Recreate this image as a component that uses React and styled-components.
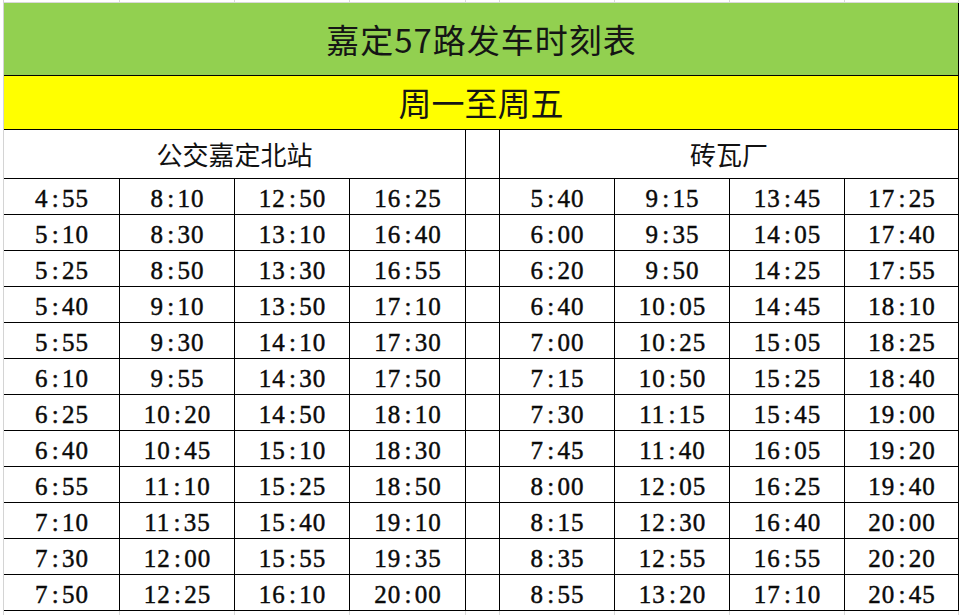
import React from "react";
import styled, { createGlobalStyle } from "styled-components";

const GlobalStyle = createGlobalStyle`
  html, body { margin: 0; padding: 0; background: #ffffff; }
  * { box-sizing: border-box; }
`;

const COLS = "116px 115px 115px 116px 34px 115px 115px 115px 114px";
const CJK = `"Noto Sans CJK SC", "Noto Sans", sans-serif`;

const Sheet = styled.div`
  margin-left: 3px;
  width: 956px;
  border-left: 1px solid #d4d4d4;
`;

const GridRow = styled.div`
  display: grid;
  grid-template-columns: ${COLS};
  height: ${(p) => p.$h}px;
  border-bottom: 1px solid ${(p) => (p.$line ? p.$line : "#000")};
`;

const GridLineCell = styled.div`
  border-right: 1px solid #d9d9d9;
`;

const Band = styled.div`
  height: ${(p) => p.$h}px;
  background: ${(p) => p.$bg};
  border-bottom: 1px solid #000;
  border-right: 1px solid #000;
  display: flex;
  align-items: center;
  justify-content: center;
  font-family: ${CJK};
  font-size: ${(p) => p.$size}px;
  letter-spacing: ${(p) => p.$ls || 0}px;
  color: #151515;
  padding-left: ${(p) => p.$ls || 0}px;
  line-height: 1;
`;

const HeadCell = styled.div`
  grid-column: span ${(p) => p.$span || 1};
  border-right: 1px solid #000;
  display: flex;
  align-items: center;
  justify-content: center;
  font-family: ${CJK};
  font-size: 26px;
  color: #111;
  line-height: 1;
`;

const Cell = styled.div`
  border-right: 1px solid #000;
  display: flex;
  align-items: center;
  justify-content: center;
  padding-top: 3px;
  font-family: "Liberation Serif", "Times New Roman", serif;
  font-size: 25px;
  letter-spacing: 1px;
  padding-left: 1px;
  color: #0a0a0a;
  -webkit-text-stroke: 0.45px #0a0a0a;
  line-height: 1;
  white-space: nowrap;
`;

const Colon = styled.span`
  display: inline-block;
  width: 13.5px;
  text-align: center;
  letter-spacing: 0;
`;

const left = [
  ["4:55", "8:10", "12:50", "16:25"],
  ["5:10", "8:30", "13:10", "16:40"],
  ["5:25", "8:50", "13:30", "16:55"],
  ["5:40", "9:10", "13:50", "17:10"],
  ["5:55", "9:30", "14:10", "17:30"],
  ["6:10", "9:55", "14:30", "17:50"],
  ["6:25", "10:20", "14:50", "18:10"],
  ["6:40", "10:45", "15:10", "18:30"],
  ["6:55", "11:10", "15:25", "18:50"],
  ["7:10", "11:35", "15:40", "19:10"],
  ["7:30", "12:00", "15:55", "19:35"],
  ["7:50", "12:25", "16:10", "20:00"],
];

const right = [
  ["5:40", "9:15", "13:45", "17:25"],
  ["6:00", "9:35", "14:05", "17:40"],
  ["6:20", "9:50", "14:25", "17:55"],
  ["6:40", "10:05", "14:45", "18:10"],
  ["7:00", "10:25", "15:05", "18:25"],
  ["7:15", "10:50", "15:25", "18:40"],
  ["7:30", "11:15", "15:45", "19:00"],
  ["7:45", "11:40", "16:05", "19:20"],
  ["8:00", "12:05", "16:25", "19:40"],
  ["8:15", "12:30", "16:40", "20:00"],
  ["8:35", "12:55", "16:55", "20:20"],
  ["8:55", "13:20", "17:10", "20:45"],
];

function Time({ value }) {
  const [h, m] = value.split(":");
  return (
    <Cell>
      {h}
      <Colon>:</Colon>
      {m}
    </Cell>
  );
}

function GridStrip({ h }) {
  return (
    <GridRow $h={h} $line={h > 3 ? "transparent" : "#d9d9d9"}>
      {Array.from({ length: 9 }).map((_, i) => (
        <GridLineCell key={i} />
      ))}
    </GridRow>
  );
}

export default function App() {
  return (
    <>
      <GlobalStyle />
      <Sheet>
        <GridStrip h={3} />
        <Band $h={73} $bg="#92d050" $size={33} $ls={1}>
          嘉定57路发车时刻表
        </Band>
        <Band $h={54} $bg="#ffff00" $size={33}>
          周一至周五
        </Band>
        <GridRow $h={49}>
          <HeadCell $span={4}>公交嘉定北站</HeadCell>
          <HeadCell />
          <HeadCell $span={4}>砖瓦厂</HeadCell>
        </GridRow>
        {left.map((row, i) => (
          <GridRow key={i} $h={36}>
            {row.map((t, j) => (
              <Time key={"l" + j} value={t} />
            ))}
            <Cell />
            {right[i].map((t, j) => (
              <Time key={"r" + j} value={t} />
            ))}
          </GridRow>
        ))}
        <GridStrip h={10} />
      </Sheet>
    </>
  );
}
